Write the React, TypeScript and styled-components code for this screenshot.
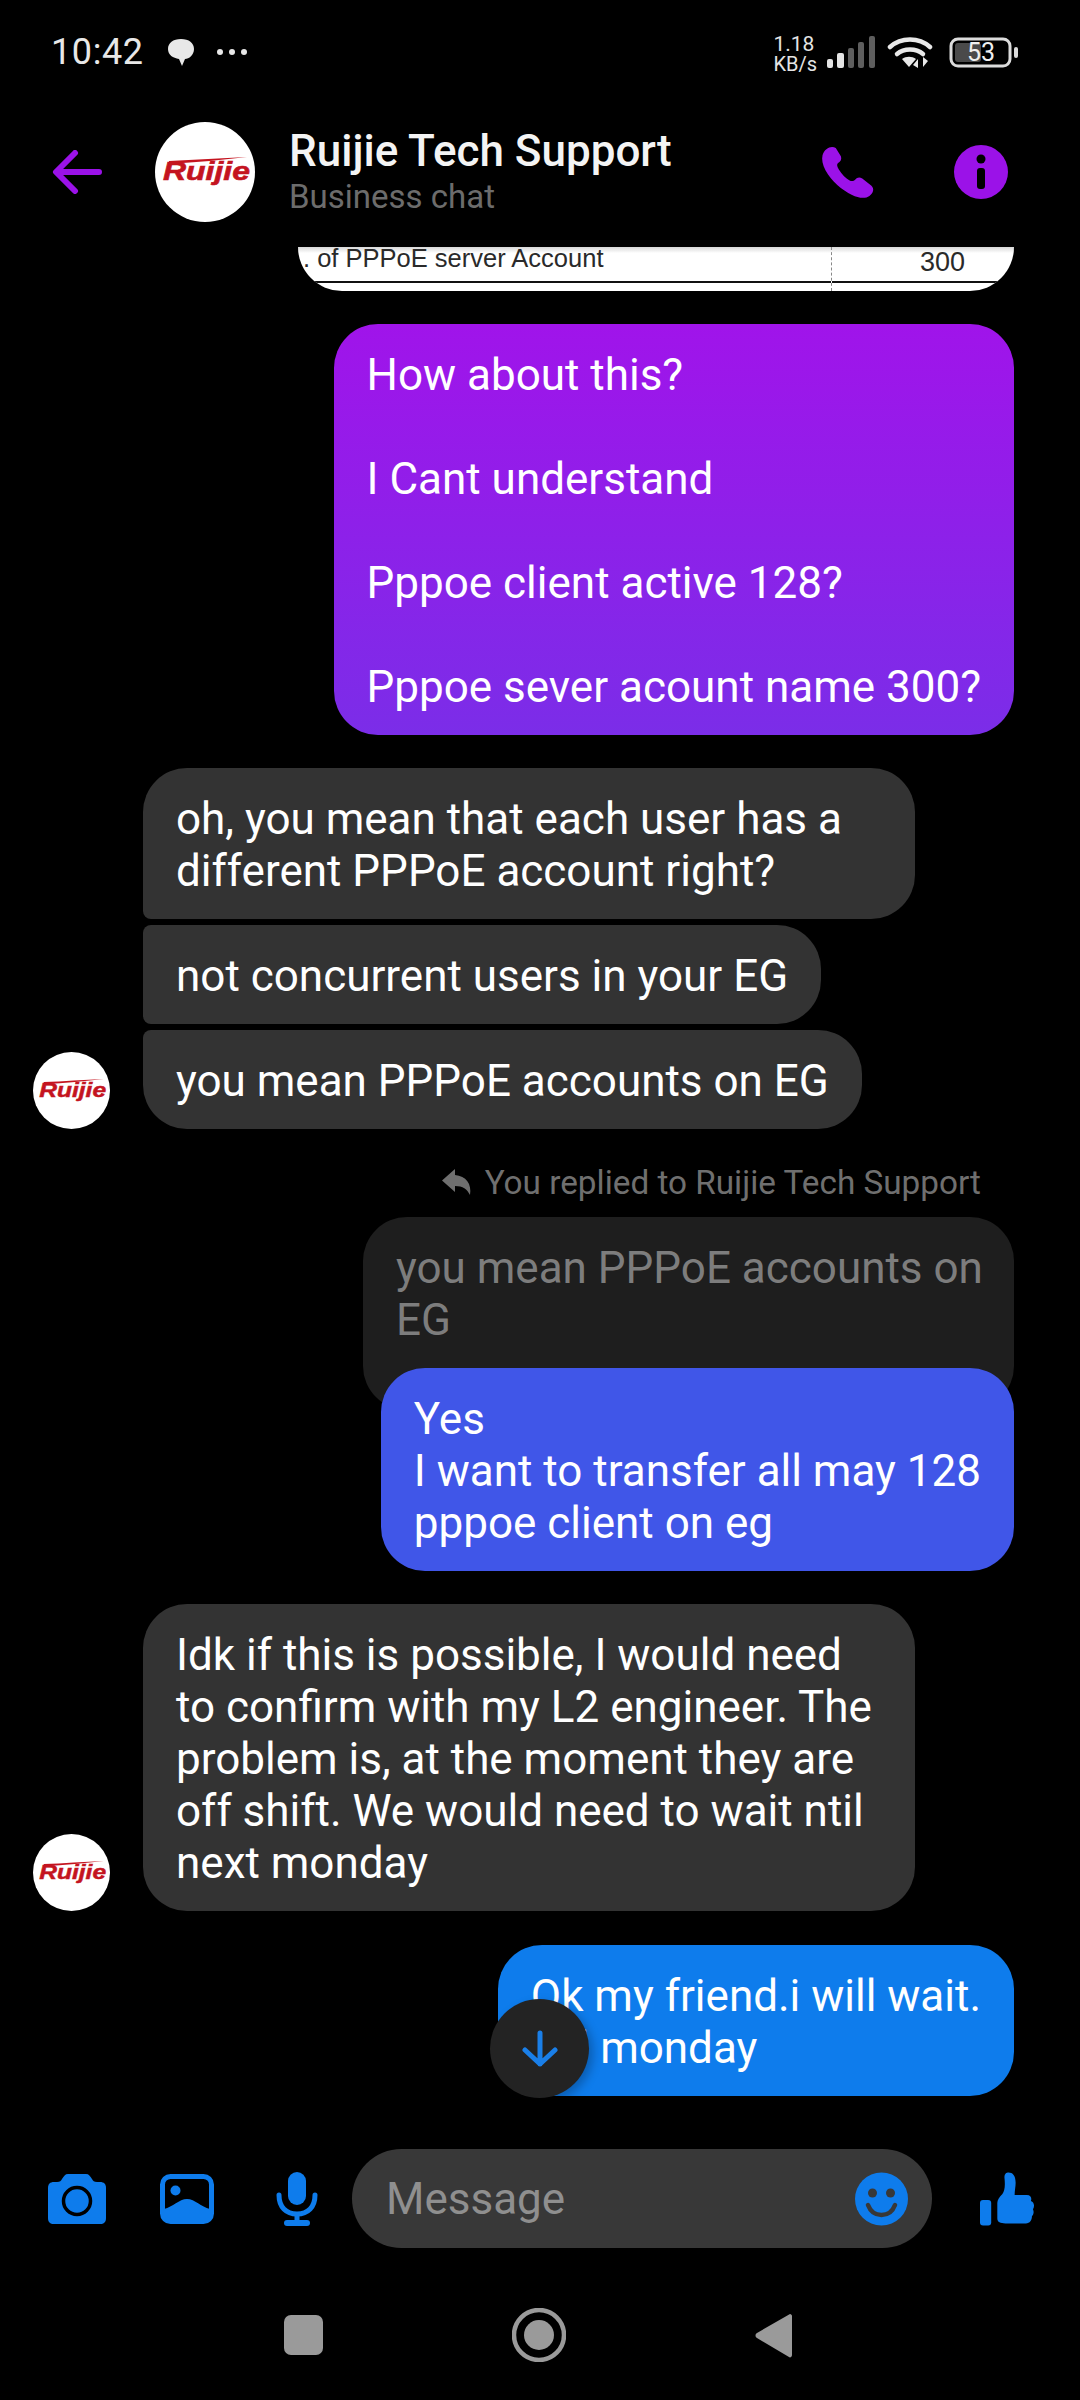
import React from "react";
import styled, { createGlobalStyle } from "styled-components";

const GlobalStyle = createGlobalStyle`
  html, body {
    margin: 0;
    padding: 0;
    background: #000;
  }
  * {
    box-sizing: border-box;
  }
`;

const Page = styled.div`
  width: 1080px;
  height: 2400px;
  display: flex;
  flex-direction: column;
  background: #000;
  color: #fff;
  font-family: Roboto, "Liberation Sans", sans-serif;
  overflow: hidden;
`;

const StatusBar = styled.div`
  height: 104px;
  flex: none;
  display: flex;
  align-items: center;
  padding: 0 62px 0 51px;
`;

const Clock = styled.span`
  font-size: 36px;
  letter-spacing: 0.6px;
  color: #e8e8e8;
  margin-right: 22px;
`;

const NetSpeed = styled.div`
  display: flex;
  flex-direction: column;
  align-items: flex-start;
  margin-left: auto;
  margin-right: 10px;
  font-size: 20px;
  line-height: 20px;
  color: #e4e4e4;
  padding-top: 4px;
`;

const SpeedValue = styled.span`
  font-size: 21px;
`;

const Top = styled.div`
  flex: none;
  height: 143px;
  display: flex;
  align-items: flex-start;
  padding: 18px 72px 0 52px;
`;

const BackSlot = styled.div`
  width: 103px;
  height: 100px;
  flex: none;
  display: flex;
  align-items: center;
`;

const TitleBlock = styled.div`
  margin-left: 34px;
  display: flex;
  flex-direction: column;
  flex: 1;
  padding-top: 4px;
`;

const Title = styled.div`
  font-size: 44px;
  line-height: 50px;
  font-weight: 500;
  color: #f4f4f4;
`;

const Subtitle = styled.div`
  font-size: 33px;
  line-height: 42px;
  color: #6c6c6c;
`;

const TopActions = styled.div`
  display: flex;
  align-items: center;
  gap: 79px;
  height: 100px;
`;

const Chat = styled.div`
  flex: 1;
  min-height: 0;
  position: relative;
  display: flex;
  flex-direction: column;
  padding: 0 66px 0 33px;
`;

const Sent = styled.div`
  display: flex;
  flex-direction: column;
  align-items: flex-end;
  margin-bottom: 33px;
`;

const Attachment = styled.div`
  width: 716px;
  height: 44px;
  background: linear-gradient(#d8d8d8 0, #fff 6px);
  border-radius: 0 0 44px 44px;
  overflow: hidden;
  display: grid;
  grid-template-columns: 533px 1fr;
  font-family: "Liberation Sans", sans-serif;
  color: #2a2a2a;
`;

const SheetCell = styled.div`
  height: 36px;
  padding-left: 5px;
  font-size: 25.5px;
  line-height: 22px;
  border-bottom: 2px solid #111;
`;

const SheetValueColumn = styled.div`
  height: 44px;
  border-left: 1px dashed #888;
`;

const SheetValue = styled.div`
  height: 36px;
  padding-left: 88px;
  font-size: 27px;
  line-height: 30px;
  border-bottom: 2px solid #111;
`;

const Bubble = styled.div<{ $bg: string; $tl?: number; $bl?: number; $fg?: string }>`
  background: ${p => p.$bg};
  color: ${p => p.$fg || "#fff"};
  font-size: 44px;
  line-height: 52px;
  padding: 25px 33px 22px;
  max-width: 772px;
  border-radius: ${p => p.$tl ?? 44}px 44px 44px ${p => p.$bl ?? 44}px;
`;

const Received = styled.div`
  display: flex;
  align-items: flex-end;
  gap: 33px;
  margin-bottom: 34px;
`;

const ReceivedStack = styled.div`
  display: flex;
  flex-direction: column;
  align-items: flex-start;
  gap: 6px;
`;

const ReplyLabel = styled.div`
  display: flex;
  align-items: center;
  gap: 13px;
  height: 36px;
  margin: 1px 33px 17px 0;
  font-size: 33.3px;
  color: #6f6f6f;
`;

const Quoted = styled(Bubble)`
  width: 651px;
  height: 193px;
  padding-right: 28px;
  margin-bottom: -42px;
`;

const JumpButton = styled.div`
  position: absolute;
  left: 490px;
  bottom: 51px;
  width: 99px;
  height: 99px;
  border-radius: 50%;
  background: #232323;
  display: flex;
  align-items: center;
  justify-content: center;
  box-shadow: 4px 4px 10px rgba(0, 0, 0, 0.25);
`;

const Composer = styled.div`
  flex: none;
  height: 121px;
  display: flex;
  align-items: flex-start;
  padding: 0 45px 0 48px;
`;

const ComposerIcons = styled.div`
  width: 304px;
  height: 99px;
  flex: none;
  display: flex;
  align-items: center;
  gap: 54px;
`;

const MicSlot = styled.div`
  margin-left: 8px;
  display: flex;
`;

const Input = styled.div`
  width: 580px;
  height: 99px;
  flex: none;
  border-radius: 50px;
  background: #383838;
  display: flex;
  align-items: center;
  justify-content: space-between;
  padding: 0 24px 0 34px;
  font-size: 44px;
  color: #8f8f8f;
`;

const LikeSlot = styled.div`
  height: 99px;
  margin-left: 48px;
  display: flex;
  align-items: center;
`;

const NavBar = styled.div`
  flex: none;
  height: 130px;
  display: flex;
  align-items: center;
  padding-left: 284px;
  gap: 189px;
`;

const NavSquare = styled.div`
  width: 39px;
  height: 40px;
  border-radius: 7px;
  background: #9a9a9a;
`;

const RuijieLogo = ({ size }: { size: number }) => (
  <svg width={size} height={size} viewBox="0 0 100 100" style={{ flex: "none" }}>
    <circle cx="50" cy="50" r="50" fill="#fff" />
    <path d="M14 39c26-1 52-3 78-4-24 3-50 5-78 7z" fill="#c4141f" />
    <text
      x="8"
      y="58"
      fontFamily="Liberation Sans"
      fontSize="26"
      fontWeight="700"
      fontStyle="italic"
      fill="#c4141f"
      stroke="#c4141f"
      strokeWidth="0.6"
      textLength="87"
      lengthAdjust="spacingAndGlyphs"
    >
      Ruijie
    </text>
  </svg>
);

const NotifyIcon = () => (
  <svg width="30" height="32" viewBox="0 0 30 32" style={{ marginRight: 20 }}>
    <path d="M15 3c8 0 13 4 13 10s-5 10-9 10l-3 7-3-7C7 22 2 19 2 13S7 3 15 3z" fill="#e8e8e8" />
    <path d="M8 3c3-2 11-2 15 0" stroke="#000" strokeWidth="1.5" fill="none" />
  </svg>
);

const DotsIcon = () => (
  <svg width="32" height="8" viewBox="0 0 32 8">
    <circle cx="4" cy="4" r="3" fill="#e8e8e8" />
    <circle cx="16" cy="4" r="3" fill="#e8e8e8" />
    <circle cx="28" cy="4" r="3" fill="#e8e8e8" />
  </svg>
);

const SignalIcon = () => (
  <svg width="48" height="32" viewBox="0 0 48 32">
    <rect x="0" y="23" width="6" height="9" rx="2" fill="#e4e4e4" />
    <rect x="10" y="17" width="7" height="15" rx="2" fill="#e4e4e4" />
    <rect x="21" y="12" width="6" height="20" rx="2" fill="#5e5e5e" />
    <rect x="31" y="6" width="6" height="26" rx="2" fill="#5e5e5e" />
    <rect x="42" y="0" width="6" height="32" rx="2" fill="#5e5e5e" />
  </svg>
);

const WifiIcon = () => (
  <svg width="46" height="34" viewBox="0 0 46 34" style={{ marginLeft: 12 }}>
    <g fill="none" stroke="#e8e8e8" strokeWidth="4.5" strokeLinecap="round">
      <path d="M3 12c11-10 29-10 40 0" />
      <path d="M10 19c7-6 19-6 26 0" />
    </g>
    <path d="M15 24c4-3 10-3 14 0l-7 8z" fill="#e8e8e8" />
    <path d="M31 33v-9l-5 6zM36 22v10l5-6z" fill="#e8e8e8" />
  </svg>
);

const BatteryIcon = () => (
  <svg width="69" height="31" viewBox="0 0 69 31" style={{ marginLeft: 16 }}>
    <rect x="2" y="2" width="59" height="27" rx="7" fill="none" stroke="#dcdcdc" strokeWidth="3" />
    <rect x="6" y="6" width="26" height="19" rx="3" fill="#4a4a4a" />
    <rect x="65" y="10" width="4" height="11" rx="2" fill="#dcdcdc" />
    <text x="18" y="24" fontFamily="Roboto" fontSize="25" fill="#efefef">
      53
    </text>
  </svg>
);

const BackIcon = () => (
  <svg width="50" height="44" viewBox="0 0 50 44">
    <path d="M23 3L4 22l19 19M5 22h42" fill="none" stroke="#9b12e8" strokeWidth="6" strokeLinecap="round" strokeLinejoin="round" />
  </svg>
);

const PhoneIcon = () => (
  <svg width="54" height="54" viewBox="0 0 52 53">
    <path
      d="M1 10C3 3 10 0 14 3l5 8c1 3 0 5-3 7-1 1-1 3 1 6 3 5 7 9 11 11 2 1 4 0 5-1 2-2 4-3 7-1l9 7c3 3 2 7-2 10-4 3-11 2-17-1C20 44 10 36 4 25 1 19 0 14 1 10z"
      fill="#9b12e8"
    />
  </svg>
);

const InfoIcon = () => (
  <svg width="54" height="54" viewBox="0 0 54 54">
    <circle cx="27" cy="27" r="27" fill="#9b12e8" />
    <circle cx="27" cy="14" r="4.5" fill="#000" />
    <rect x="23" y="23" width="8" height="21" rx="3" fill="#000" />
  </svg>
);

const ReplyIcon = () => (
  <svg width="30" height="26" viewBox="0 0 30 26">
    <path d="M13 0L0 11.5 13 23v-6c8 0 12 3 15 9 2-11-4-19-15-20z" fill="#6f6f6f" />
  </svg>
);

const ArrowDownIcon = () => (
  <svg width="36" height="38" viewBox="0 0 36 38">
    <path d="M18 3v31M3 20l15 14 15-14" fill="none" stroke="#1a7fe8" strokeWidth="5" strokeLinecap="round" strokeLinejoin="round" />
  </svg>
);

const CameraIcon = () => (
  <svg width="58" height="50" viewBox="0 0 58 50">
    <path
      d="M20 0h18c3 0 4 2 6 5 1 2 2 3 5 3h3c4 0 6 2 6 6v30c0 4-2 6-6 6H6c-4 0-6-2-6-6V14c0-4 2-6 6-6h3c3 0 4-1 5-3 2-3 3-5 6-5z"
      fill="#0e7cec"
    />
    <circle cx="29" cy="27" r="13.5" fill="none" stroke="#000" strokeWidth="3.5" />
  </svg>
);

const PictureIcon = () => (
  <svg width="54" height="50" viewBox="0 0 54 50">
    <rect x="2.5" y="2.5" width="49" height="45" rx="8" fill="none" stroke="#0e7cec" strokeWidth="5" />
    <path d="M4 35c9-2 15-10 23-10s14 8 23 10v9l-4 4H8l-4-4z" fill="#0e7cec" />
    <circle cx="15.5" cy="16.5" r="5" fill="#0e7cec" />
  </svg>
);

const MicIcon = () => (
  <svg width="42" height="54" viewBox="0 0 42 54">
    <rect x="12" y="0" width="18" height="33" rx="9" fill="#0e7cec" />
    <path d="M3 23c0 12 7 19 18 19s18-7 18-19" fill="none" stroke="#0e7cec" strokeWidth="5" strokeLinecap="round" />
    <rect x="18.5" y="42" width="5" height="8" fill="#0e7cec" />
    <rect x="8" y="48" width="26" height="6" rx="3" fill="#0e7cec" />
  </svg>
);

const SmileIcon = () => (
  <svg width="53" height="54" viewBox="0 0 53 54">
    <circle cx="26.5" cy="27" r="26.5" fill="#0e7cec" />
    <circle cx="17.5" cy="21" r="4.5" fill="#383838" />
    <circle cx="35.5" cy="21" r="4.5" fill="#383838" />
    <path d="M13 33c3 8 8 10 13.5 10S37 41 40 33" fill="none" stroke="#383838" strokeWidth="4.5" strokeLinecap="round" />
  </svg>
);

const ThumbIcon = () => (
  <svg width="55" height="56" viewBox="0 0 54 52">
    <rect x="0" y="27" width="11" height="25" rx="3" fill="#0e7cec" />
    <path
      d="M17 45V30c0-3 2-6 5-9 2-3 3-7 2-16 0-4 2-5 4-5 4 0 7 3 7 10 0 4-1 8-1 12h12c4 0 5 3 4 6 3 1 4 5 2 8 1 2 1 5-1 7 0 4-2 7-6 7H25c-5 0-8-1-8-5z"
      fill="#0e7cec"
    />
  </svg>
);

const HomeIcon = () => (
  <svg width="54" height="54" viewBox="0 0 54 54">
    <circle cx="27" cy="27" r="25" fill="none" stroke="#9a9a9a" strokeWidth="4.5" />
    <circle cx="27" cy="27" r="15" fill="#9a9a9a" />
  </svg>
);

const BackTriangle = () => (
  <svg width="37" height="45" viewBox="0 0 37 45">
    <path d="M35 1c1 0 2 1 2 2v39c0 2-2 3-3 2L2 25c-2-1-2-4 0-5z" fill="#9a9a9a" />
  </svg>
);

export default function App() {
  return (
    <Page>
      <GlobalStyle />
      <StatusBar>
        <Clock>10:42</Clock>
        <NotifyIcon />
        <DotsIcon />
        <NetSpeed>
          <SpeedValue>1.18</SpeedValue>
          <span>KB/s</span>
        </NetSpeed>
        <SignalIcon />
        <WifiIcon />
        <BatteryIcon />
      </StatusBar>
      <Top>
        <BackSlot>
          <BackIcon />
        </BackSlot>
        <RuijieLogo size={100} />
        <TitleBlock>
          <Title>Ruijie Tech Support</Title>
          <Subtitle>Business chat</Subtitle>
        </TitleBlock>
        <TopActions>
          <PhoneIcon />
          <InfoIcon />
        </TopActions>
      </Top>
      <Chat>
        <Sent>
          <Attachment>
            <SheetCell>. of PPPoE server Account</SheetCell>
            <SheetValueColumn>
              <SheetValue>300</SheetValue>
            </SheetValueColumn>
          </Attachment>
        </Sent>
        <Sent>
          <Bubble $bg="linear-gradient(#a014ea, #7b2de8)">
            How about this?
            <br />
            <br />
            I Cant understand
            <br />
            <br />
            Pppoe client active 128?
            <br />
            <br />
            Pppoe sever acount name 300?
          </Bubble>
        </Sent>
        <Received>
          <RuijieLogo size={77} />
          <ReceivedStack>
            <Bubble $bg="#333" $bl={8}>
              oh, you mean that each user has a different PPPoE account right?
            </Bubble>
            <Bubble $bg="#333" $tl={8} $bl={8}>
              not concurrent users in your EG
            </Bubble>
            <Bubble $bg="#333" $tl={8}>
              you mean PPPoE accounts on EG
            </Bubble>
          </ReceivedStack>
        </Received>
        <Sent>
          <ReplyLabel>
            <ReplyIcon />
            You replied to Ruijie Tech Support
          </ReplyLabel>
          <Quoted $bg="#1e1e1e" $fg="#7d7d7d">
            you mean PPPoE accounts on EG
          </Quoted>
          <Bubble $bg="#4056e8">
            Yes
            <br />I want to transfer all may 128
            <br />
            pppoe client on eg
          </Bubble>
        </Sent>
        <Received>
          <RuijieLogo size={77} />
          <ReceivedStack>
            <Bubble $bg="#333">
              Idk if this is possible, I would need to confirm with my L2 engineer. The problem is, at the moment they are off shift. We would need to wait ntil next monday
            </Bubble>
          </ReceivedStack>
        </Received>
        <Sent>
          <Bubble $bg="#0e7cec">
            Ok my friend.i will wait.
            <br />
            Till monday
          </Bubble>
        </Sent>
        <JumpButton>
          <ArrowDownIcon />
        </JumpButton>
      </Chat>
      <Composer>
        <ComposerIcons>
          <CameraIcon />
          <PictureIcon />
          <MicSlot>
            <MicIcon />
          </MicSlot>
        </ComposerIcons>
        <Input>
          Message
          <SmileIcon />
        </Input>
        <LikeSlot>
          <ThumbIcon />
        </LikeSlot>
      </Composer>
      <NavBar>
        <NavSquare />
        <HomeIcon />
        <BackTriangle />
      </NavBar>
    </Page>
  );
}
